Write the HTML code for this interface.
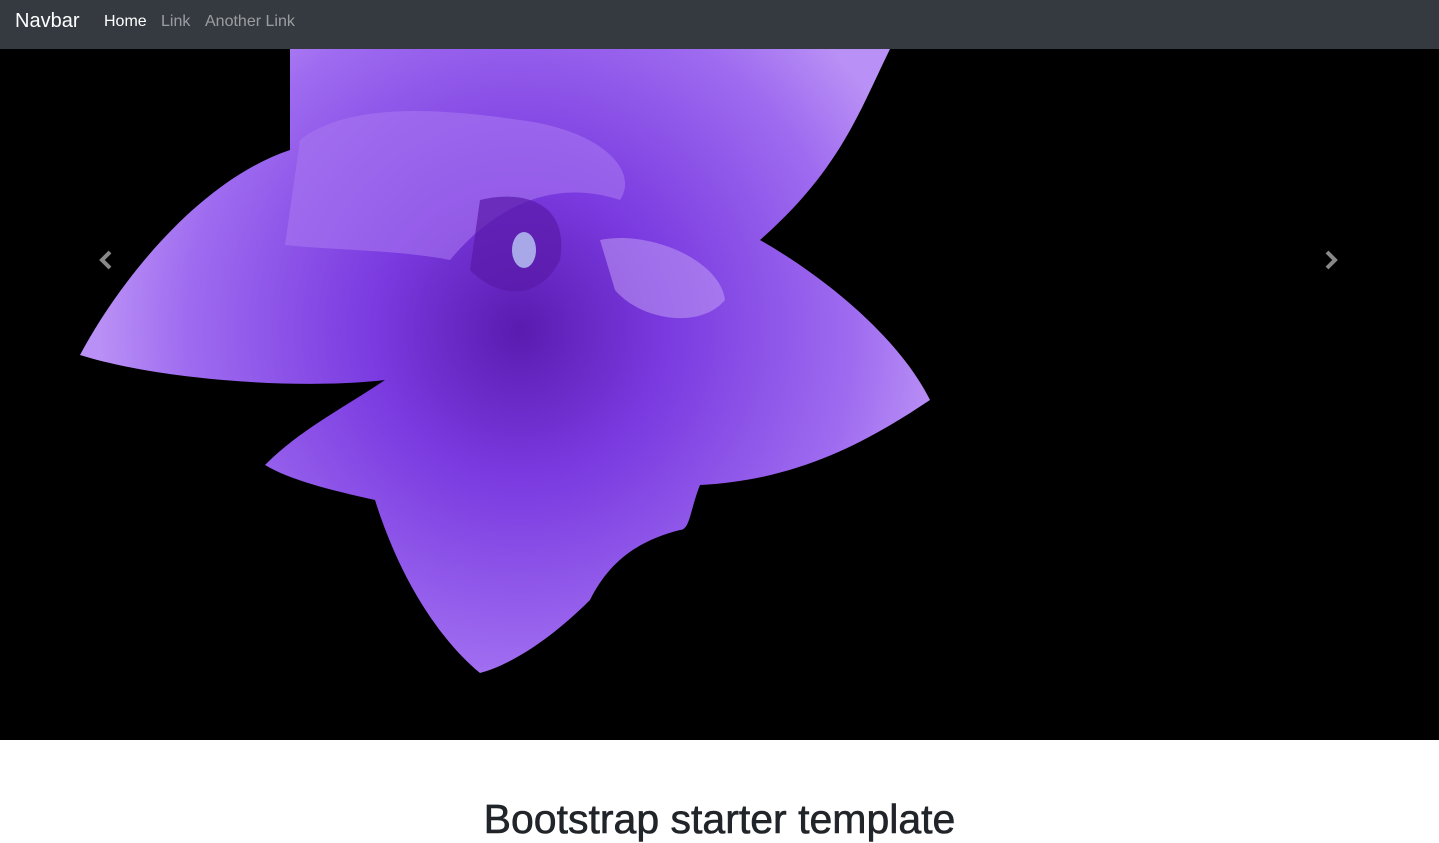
<!DOCTYPE html>
<html><head><style>
body{margin:0;width:1439px;height:814px;overflow:hidden;background:#fff;font-family:"Liberation Sans",sans-serif}
nav{position:absolute;left:0;top:0;width:1439px;height:49px;background:#343a40}
nav span{position:absolute;top:13px;font-size:16px;color:rgba(255,255,255,.5)}
.car{position:absolute;left:0;top:49px;width:1439px;height:691px;background:#000;overflow:hidden}
h1{position:absolute;top:796px;left:0;width:1439px;text-align:center;margin:0;font-size:41px;font-weight:normal;color:#212529;-webkit-text-stroke:.6px #212529}
</style></head><body>
<nav>
<span style="left:15px;top:10px;font-size:20px;color:#fff">Navbar</span>
<span style="left:104px;color:#fff">Home</span>
<span style="left:161px">Link</span>
<span style="left:205px">Another Link</span>
</nav>
<div class="car">
<svg width="1439" height="691" viewBox="0 49 1439 691">
<defs>
<radialGradient id="g" cx="520" cy="330" r="420" gradientUnits="userSpaceOnUse">
<stop offset="0" stop-color="#5a1bb0"/><stop offset=".35" stop-color="#7a3ae0"/><stop offset=".8" stop-color="#9f6cf0"/><stop offset="1" stop-color="#b990f5"/>
</radialGradient>
</defs>
<path fill="url(#g)" d="M290 49 L890 49 C860 110 840 170 760 240 C830 280 900 340 930 400 C870 440 800 480 700 485 C690 510 690 530 680 530 C640 540 610 560 590 600 C550 640 510 665 480 673 C440 640 400 580 375 500 C330 490 290 480 265 465 C300 430 340 410 385 380 C300 390 160 380 80 355 C120 280 200 180 290 150 Z"/>
<path fill="#a877f0" opacity=".6" d="M300 140 C350 100 450 110 520 120 C600 130 640 170 620 200 C560 180 500 200 450 260 C400 250 330 250 285 245 Z"/>
<path fill="#5a1aa8" opacity=".7" d="M480 200 C520 190 570 200 560 260 C540 300 500 300 470 270 Z"/>
<ellipse cx="524" cy="250" rx="12" ry="18" fill="#a8a8e8"/>
<path fill="#c6a3f5" opacity=".5" d="M600 240 C650 230 720 260 725 300 C700 330 640 320 615 290 Z"/>
</svg>
<svg style="position:absolute;left:99px;top:201px" width="16" height="20" viewBox="0 0 16 20"><path d="M11 2 L3 10 L11 18" stroke="#888" stroke-width="4" fill="none"/></svg>
<svg style="position:absolute;left:1323px;top:201px" width="16" height="20" viewBox="0 0 16 20"><path d="M4 2 L12 10 L4 18" stroke="#888" stroke-width="4" fill="none"/></svg>
</div>
<h1>Bootstrap starter template</h1>
</body></html>
